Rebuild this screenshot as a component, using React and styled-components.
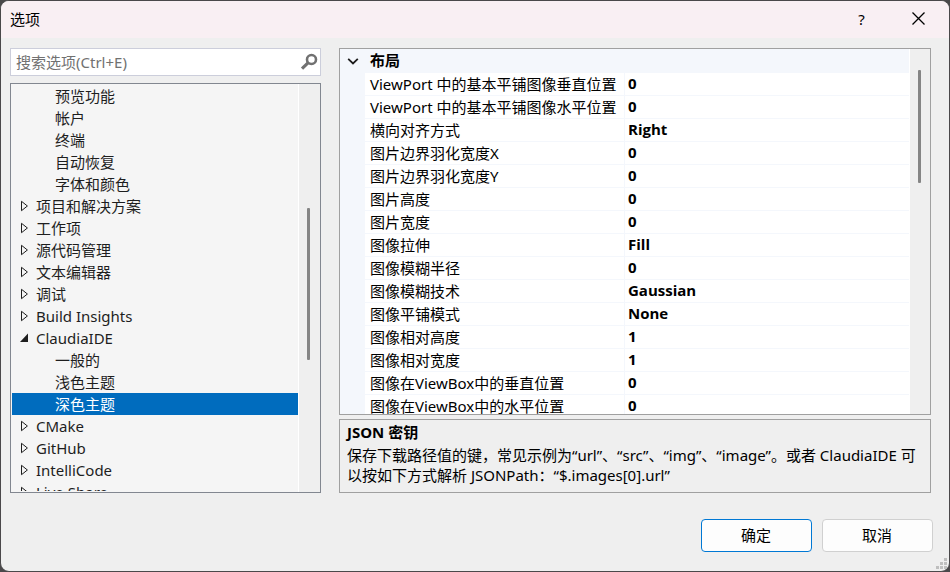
import { useState } from "react";
import styled, { createGlobalStyle } from "styled-components";

const GlobalStyle = createGlobalStyle`
  * {
    box-sizing: border-box;
  }

  body {
    margin: 0;
    background: #4a484a;
    color: #000000;
    font-family: "Noto Sans", "Noto Sans CJK SC", sans-serif;
    font-size: 15px;
  }

  button,
  input {
    font: inherit;
    color: inherit;
  }
`;

const Dialog = styled.main`
  display: flex;
  flex-direction: column;
  height: 100vh;
  min-height: 360px;
  border: 1px solid #4a484a;
  border-radius: 9px;
  background: #efefef;
  overflow: hidden;
  position: relative;
`;

const TitleBar = styled.header`
  display: flex;
  align-items: center;
  flex: none;
  height: 37px;
  padding: 0 2px 2px 9px;
  background: #f9eff3;
`;

const Title = styled.h1`
  flex: 1;
  margin: 0;
  font-size: 15px;
  font-weight: 400;
  line-height: 20px;
`;

const CaptionButton = styled.button`
  display: flex;
  align-items: center;
  justify-content: center;
  width: 57px;
  height: 100%;
  padding: 0;
  border: none;
  background: transparent;
`;

const Body = styled.div`
  display: flex;
  flex: 1;
  gap: 18px;
  min-height: 0;
  padding: 10px 18px 0 9px;
`;

const Sidebar = styled.nav`
  display: flex;
  flex-direction: column;
  flex: none;
  width: 311px;
  gap: 7px;
`;

const SearchBox = styled.div`
  display: flex;
  align-items: center;
  flex: none;
  height: 28px;
  padding: 0 2px 0 5px;
  border: 1px solid #cccedb;
  background: #ffffff;
`;

const SearchInput = styled.input`
  flex: 1;
  min-width: 0;
  padding: 0;
  border: none;
  outline: none;
  background: transparent;

  &::placeholder {
    color: #717171;
    opacity: 1;
  }
`;

const SearchButton = styled.button`
  display: flex;
  padding: 0;
  border: none;
  background: transparent;
`;

const TreePanel = styled.div`
  display: flex;
  flex: 1;
  min-height: 0;
  border: 1px solid #828790;
  background: #f5f5f5;
`;

const Tree = styled.ul`
  flex: 1;
  margin: 1px 0 1px 1px;
  padding: 0;
  list-style: none;
  overflow-y: auto;
  scrollbar-width: none;
`;

const TreeItem = styled.button`
  display: flex;
  align-items: center;
  width: 100%;
  height: 22px;
  padding: 0 0 0 ${({ $child }) => ($child ? "43px" : "8px")};
  border: none;
  background: ${({ $selected }) => ($selected ? "#006cbe" : "transparent")};
  color: ${({ $selected }) => ($selected ? "#ffffff" : "#1e1e1e")};
  line-height: 22px;
  text-align: left;
  white-space: nowrap;
`;

const TreeArrow = styled.svg`
  flex: none;
  width: 9px;
  height: 12px;
  margin-right: 7px;
`;

const ScrollTrack = styled.div`
  flex: none;
  width: ${({ $width }) => $width};
  padding: ${({ $top }) => $top} 0 0 8px;
  border-left: 1px solid #ffffff;
  background: #efefef;
`;

const ScrollThumb = styled.div`
  width: 3px;
  height: ${({ $size }) => $size};
  border-radius: 1px;
  background: #858585;
`;

const Main = styled.section`
  display: flex;
  flex-direction: column;
  flex: 1;
  min-width: 0;
  gap: 4px;
`;

const GridPanel = styled.div`
  display: flex;
  flex: 1;
  min-height: 0;
  border: 1px solid #a0a0a0;
  background: #ffffff;
`;

const GridScroller = styled.div`
  flex: 1;
  min-width: 0;
  overflow-y: auto;
  scrollbar-width: none;
`;

const PropertyTable = styled.table`
  width: 100%;
  table-layout: fixed;
  border-collapse: separate;
  border-spacing: 0;
`;

const GutterCol = styled.col`
  width: 25px;
`;

const NameCol = styled.col`
  width: 260px;
`;

const GutterCell = styled.td`
  padding: 0;
  background: #f4f7fc;
`;

const CategoryCell = styled.th`
  height: 24px;
  padding: 0 5px 2px;
  background: #f4f7fc;
  font-weight: 700;
  line-height: 22px;
  text-align: left;
`;

const CollapseButton = styled.button`
  display: flex;
  align-items: center;
  justify-content: center;
  width: 25px;
  height: 24px;
  padding: 0;
  border: none;
  background: transparent;
`;

const NameCell = styled.th`
  height: 23px;
  padding: 0 0 0 5px;
  border-right: 1px solid #f4f7fc;
  border-bottom: 1px solid #f4f7fc;
  font-weight: 400;
  line-height: 22px;
  text-align: left;
  white-space: nowrap;
`;

const ValueCell = styled.td`
  height: 23px;
  padding: 0 3px 2px;
  border-bottom: 1px solid #f4f7fc;
  font-family: "Open Sans", "Noto Sans CJK SC", sans-serif;
  font-weight: 700;
  line-height: 20px;
`;

const Description = styled.div`
  flex: none;
  min-height: 74px;
  padding: 2px 7px 6px;
  border: 1px solid #a0a0a0;
`;

const DescriptionTitle = styled.h2`
  margin: 0 0 3px;
  font-size: 15px;
  font-weight: 700;
  line-height: 20px;
`;

const DescriptionText = styled.p`
  margin: 0;
  line-height: 20px;
`;

const Footer = styled.footer`
  display: flex;
  justify-content: flex-end;
  flex: none;
  gap: 10px;
  padding: 26px 16px 19px;
`;

const DialogButton = styled.button`
  width: 111px;
  height: 33px;
  padding: 0 1px 2px 0;
  border: 1px solid ${({ $primary }) => ($primary ? "#0078d4" : "#d0d0d0")};
  border-radius: 4px;
  background: #fdfdfd;
`;

const ResizeGrip = styled.svg`
  position: absolute;
  right: 2px;
  bottom: 2px;
`;

const treeData = [
  { text: "预览功能", child: true },
  { text: "帐户", child: true },
  { text: "终端", child: true },
  { text: "自动恢复", child: true },
  { text: "字体和颜色", child: true },
  { text: "项目和解决方案" },
  { text: "工作项" },
  { text: "源代码管理" },
  { text: "文本编辑器" },
  { text: "调试" },
  { text: "Build Insights" },
  { text: "ClaudiaIDE", open: true },
  { text: "一般的", child: true },
  { text: "浅色主题", child: true },
  { text: "深色主题", child: true },
  { text: "CMake" },
  { text: "GitHub" },
  { text: "IntelliCode" },
  { text: "Live Share" },
];

const properties = [
  ["ViewPort 中的基本平铺图像垂直位置", "0"],
  ["ViewPort 中的基本平铺图像水平位置", "0"],
  ["横向对齐方式", "Right"],
  ["图片边界羽化宽度X", "0"],
  ["图片边界羽化宽度Y", "0"],
  ["图片高度", "0"],
  ["图片宽度", "0"],
  ["图像拉伸", "Fill"],
  ["图像模糊半径", "0"],
  ["图像模糊技术", "Gaussian"],
  ["图像平铺模式", "None"],
  ["图像相对高度", "1"],
  ["图像相对宽度", "1"],
  ["图像在ViewBox中的垂直位置", "0"],
  ["图像在ViewBox中的水平位置", "0"],
];

const OptionsTree = () => {
  const [selected, setSelected] = useState("深色主题");
  return (
    <TreePanel>
      <Tree>
        {treeData.map((item) => {
          return (
            <li key={item.text}>
              <TreeItem
                type="button"
                $child={item.child}
                $selected={item.text === selected}
                onClick={() => setSelected(item.text)}
              >
                {!item.child && (
                  <TreeArrow viewBox="0 0 9 12" aria-hidden="true">
                    {item.open ? (
                      <path d="M8 1.5V10H0Z" fill="#1e1e1e" />
                    ) : (
                      <path
                        d="M1.5 1.3V10.7L7.4 6Z"
                        fill="none"
                        stroke="#1e1e1e"
                      />
                    )}
                  </TreeArrow>
                )}
                {item.text}
              </TreeItem>
            </li>
          );
        })}
      </Tree>
      <ScrollTrack $width="22px" $top="124px">
        <ScrollThumb $size="152px" />
      </ScrollTrack>
    </TreePanel>
  );
};

const PropertyGrid = () => {
  const [open, setOpen] = useState(true);
  return (
    <GridPanel>
      <GridScroller>
        <PropertyTable>
          <colgroup>
            <GutterCol />
            <NameCol />
            <col />
          </colgroup>
          <tbody>
            <tr>
              <GutterCell>
                <CollapseButton
                  type="button"
                  aria-label="布局"
                  aria-expanded={open}
                  onClick={() => setOpen(!open)}
                >
                  <svg width="12" height="8" viewBox="0 0 12 8">
                    <path
                      d="M1.2 1.8L6 6.4L10.8 1.8"
                      fill="none"
                      stroke="#1e1e1e"
                      strokeWidth="1.8"
                    />
                  </svg>
                </CollapseButton>
              </GutterCell>
              <CategoryCell colSpan={2}>布局</CategoryCell>
            </tr>
            {open &&
              properties.map(([name, value]) => {
                return (
                  <tr key={name}>
                    <GutterCell />
                    <NameCell scope="row">{name}</NameCell>
                    <ValueCell>{value}</ValueCell>
                  </tr>
                );
              })}
          </tbody>
        </PropertyTable>
      </GridScroller>
      <ScrollTrack $width="21px" $top="21px">
        <ScrollThumb $size="113px" />
      </ScrollTrack>
    </GridPanel>
  );
};

const App = () => {
  return (
    <>
      <GlobalStyle />
      <Dialog>
        <TitleBar>
          <Title>选项</Title>
          <CaptionButton type="button">?</CaptionButton>
          <CaptionButton type="button" aria-label="关闭">
            <svg width="13" height="13" viewBox="0 0 13 13">
              <path
                d="M0.5 0.5L12.5 12.5M12.5 0.5L0.5 12.5"
                stroke="#000000"
                strokeWidth="1.3"
              />
            </svg>
          </CaptionButton>
        </TitleBar>
        <Body>
          <Sidebar>
            <SearchBox>
              <SearchInput
                type="text"
                aria-label="搜索选项"
                placeholder="搜索选项(Ctrl+E)"
              />
              <SearchButton type="button" aria-label="搜索">
                <svg width="18" height="18" viewBox="0 0 18 18">
                  <g fill="none" stroke="#717171">
                    <circle cx="11.5" cy="6.5" r="4.5" strokeWidth="2.6" />
                    <path d="M8 9.8L2 15.6" strokeWidth="3.2" />
                  </g>
                </svg>
              </SearchButton>
            </SearchBox>
            <OptionsTree />
          </Sidebar>
          <Main>
            <PropertyGrid />
            <Description>
              <DescriptionTitle>JSON 密钥</DescriptionTitle>
              <DescriptionText>
                保存下载路径值的键，常见示例为“url”、“src”、“img”、“image”。或者
                ClaudiaIDE 可以按如下方式解析 JSONPath：“$.images[0].url”
              </DescriptionText>
            </Description>
          </Main>
        </Body>
        <Footer>
          <DialogButton type="button" $primary>
            确定
          </DialogButton>
          <DialogButton type="button">取消</DialogButton>
        </Footer>
        <ResizeGrip width="11" height="11" viewBox="0 0 11 11">
          <path
            d="M8 0h3v3h-3zM4 4h3v3h-3zM8 4h3v3h-3zM0 8h3v3h-3zM4 8h3v3h-3zM8 8h3v3h-3z"
            fill="#bfbfbf"
          />
        </ResizeGrip>
      </Dialog>
    </>
  );
};

export default App;
